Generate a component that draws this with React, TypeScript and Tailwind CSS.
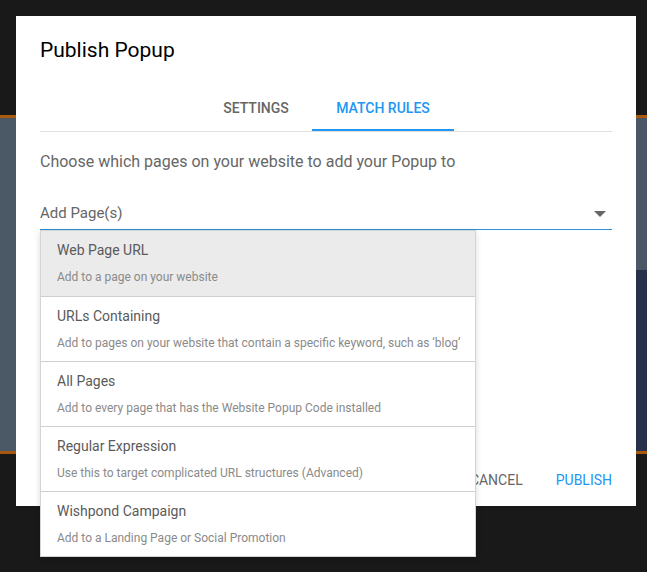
import { useState } from 'react';

const options = [
  { title: 'Web Page URL', desc: 'Add to a page on your website' },
  { title: 'URLs Containing', desc: 'Add to pages on your website that contain a specific keyword, such as \u2018blog\u2019' },
  { title: 'All Pages', desc: 'Add to every page that has the Website Popup Code installed' },
  { title: 'Regular Expression', desc: 'Use this to target complicated URL structures (Advanced)' },
  { title: 'Wishpond Campaign', desc: 'Add to a Landing Page or Social Promotion' },
];

function Backdrop() {
  return (
    <div className="w-full h-[572px] bg-[#191919] flex flex-col">
      <div className="h-[115px]" />
      <div className="h-[3px] bg-[#a8590f]" />
      <div className="h-[333px] flex">
        <div className="flex-1 bg-[#4b5866]" />
        <div className="w-[20px] flex flex-col">
          <div className="h-[152px] bg-[#4a5765]" />
          <div className="flex-1 bg-[#27324a]" />
        </div>
      </div>
      <div className="h-[3px] bg-[#a8590f]" />
    </div>
  );
}

function AddPageMenu() {
  return (
    <div className="absolute left-[24px] top-[214px] w-[436px] bg-white border border-[#d4d4d4] shadow-[0_2px_6px_rgba(0,0,0,0.15)] z-10">
      {options.map((o, i) => (
        <div
          key={o.title}
          className={`h-[65px] px-4 pt-[10px] ${i === 0 ? 'bg-[#ebebeb]' : 'bg-white'} ${i > 0 ? 'border-t border-[#d0d0d0]' : ''}`}
        >
          <div className="text-[14px] leading-[18px] text-[#5a5a5a]">{o.title}</div>
          <div className="mt-[10px] text-[12px] leading-[16px] text-[#8a8a8a] whitespace-nowrap">{o.desc}</div>
        </div>
      ))}
    </div>
  );
}

export default function App() {
  const [tab, setTab] = useState('rules');

  return (
    <div className="relative w-[647px] h-[572px] overflow-hidden" style={{ fontFamily: 'Roboto, "Noto Sans", sans-serif' }}>
      <Backdrop />

      {/* Modal */}
      <div className="absolute left-[16px] top-[16px] w-[620px] h-[490px] bg-white px-6 pt-[20px]">
        <h1 className="text-[21px] leading-[28px] text-black">Publish Popup</h1>

        {/* Tabs */}
        <div className="mt-[23px] flex border-b border-[#e0e0e0]">
          <div className="w-[160px]" />
          <button
            onClick={() => setTab('settings')}
            className={`w-[112px] h-[44px] text-[14px] font-medium uppercase ${tab === 'settings' ? 'text-[#2196f3] border-b-2 border-[#2196f3]' : 'text-[#666] border-b-2 border-transparent'}`}
          >
            Settings
          </button>
          <button
            onClick={() => setTab('rules')}
            className={`w-[142px] h-[44px] text-[14px] font-medium uppercase ${tab === 'rules' ? 'text-[#2196f3] border-b-2 border-[#2196f3]' : 'text-[#666] border-b-2 border-transparent'}`}
          >
            Match Rules
          </button>
        </div>

        <p className="mt-[20px] text-[16px] leading-[20px] text-[#666]">
          Choose which pages on your website to add your Popup to
        </p>

        {/* Select */}
        <div className="mt-[28px] flex items-center justify-between h-[30px] border-b border-[#2f8fd8] pb-[2px]">
          <span className="text-[15px] text-[#666]">Add Page(s)</span>
          <svg className="w-[12px] h-[6px] mr-[6px]" viewBox="0 0 12 6">
            <path d="M0 0h12L6 6z" fill="#666" />
          </svg>
        </div>

        {/* Footer actions */}
        <div className="absolute right-[24px] bottom-[15px] flex items-center gap-[33px]">
          <button className="text-[14px] text-[#666] uppercase">Cancel</button>
          <button className="text-[14px] text-[#2196f3] uppercase">Publish</button>
        </div>

        <AddPageMenu />
      </div>
    </div>
  );
}
